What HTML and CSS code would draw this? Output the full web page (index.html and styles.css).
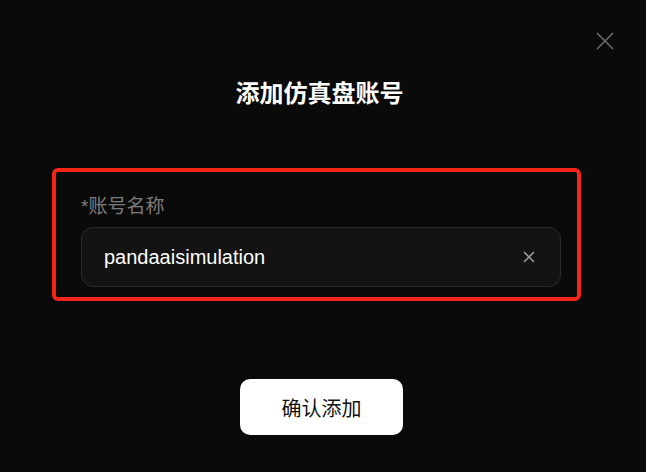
FILE: index.html
```html
<!DOCTYPE html>
<html lang="zh">
<head>
<meta charset="utf-8">
<title>添加仿真盘账号</title>
<link rel="stylesheet" href="styles.css">
</head>
<body>
<div class="dialog">
  <button class="close" aria-label="关闭">
    <svg width="20" height="20" viewBox="0 0 20 20"><path d="M2 2L18 18M18 2L2 18" stroke="#6a6a6a" stroke-width="1.6" fill="none"/></svg>
  </button>
  <h1 class="title">添加仿真盘账号</h1>
  <div class="highlight">
    <label class="label" for="acct">*账号名称</label>
    <div class="input">
      <span class="value" id="acct">pandaaisimulation</span>
      <svg class="clear" width="12" height="12" viewBox="0 0 12 12"><path d="M1 1L11 11M11 1L1 11" stroke="#9a9a9a" stroke-width="1.6" fill="none"/></svg>
    </div>
  </div>
  <button class="confirm">确认添加</button>
</div>
</body>
</html>
```
FILE: styles.css
```css
* { box-sizing: border-box; }
html, body { margin: 0; padding: 0; }
body {
  background: #0a0a0a;
  font-family: "Liberation Sans", "Noto Sans CJK SC", sans-serif;
  color: #fff;
}
.dialog {
  position: relative;
  height: 472px;
  display: flex;
  flex-direction: column;
  align-items: flex-start;
}
.close {
  position: absolute;
  left: 595px;
  top: 31px;
  width: 20px;
  height: 20px;
  padding: 0;
  border: 0;
  background: none;
  display: flex;
}
.title {
  margin: 78px 0 0 0;
  width: 100%;
  text-align: center;
  padding-left: 0;
  font-size: 24px;
  line-height: 32px;
  font-weight: 700;
  color: #fff;
  text-indent: -7px;
}
.highlight {
  margin: 58px 0 0 52px;
  width: 529px;
  border: 4px solid #f52419;
  border-radius: 6px;
  padding: 23px 16px 10px 25px;
  display: flex;
  flex-direction: column;
  gap: 8px;
}
.label {
  font-size: 19px;
  line-height: 24px;
  color: #7c7c7c;
}
.input {
  height: 60px;
  border: 1px solid #2a2a2a;
  background: #131313;
  border-radius: 12px;
  padding: 0 25px 0 22px;
  display: flex;
  align-items: center;
  justify-content: space-between;
}
.value {
  font-size: 20px;
  color: #fff;
}
.confirm {
  margin: 78px 0 0 240px;
  width: 163px;
  height: 56px;
  border: 0;
  border-radius: 10px;
  background: #fff;
  color: #111;
  font-family: "Liberation Sans", "Noto Sans CJK SC", sans-serif;
  font-size: 20px;
  padding: 0;
}
```
